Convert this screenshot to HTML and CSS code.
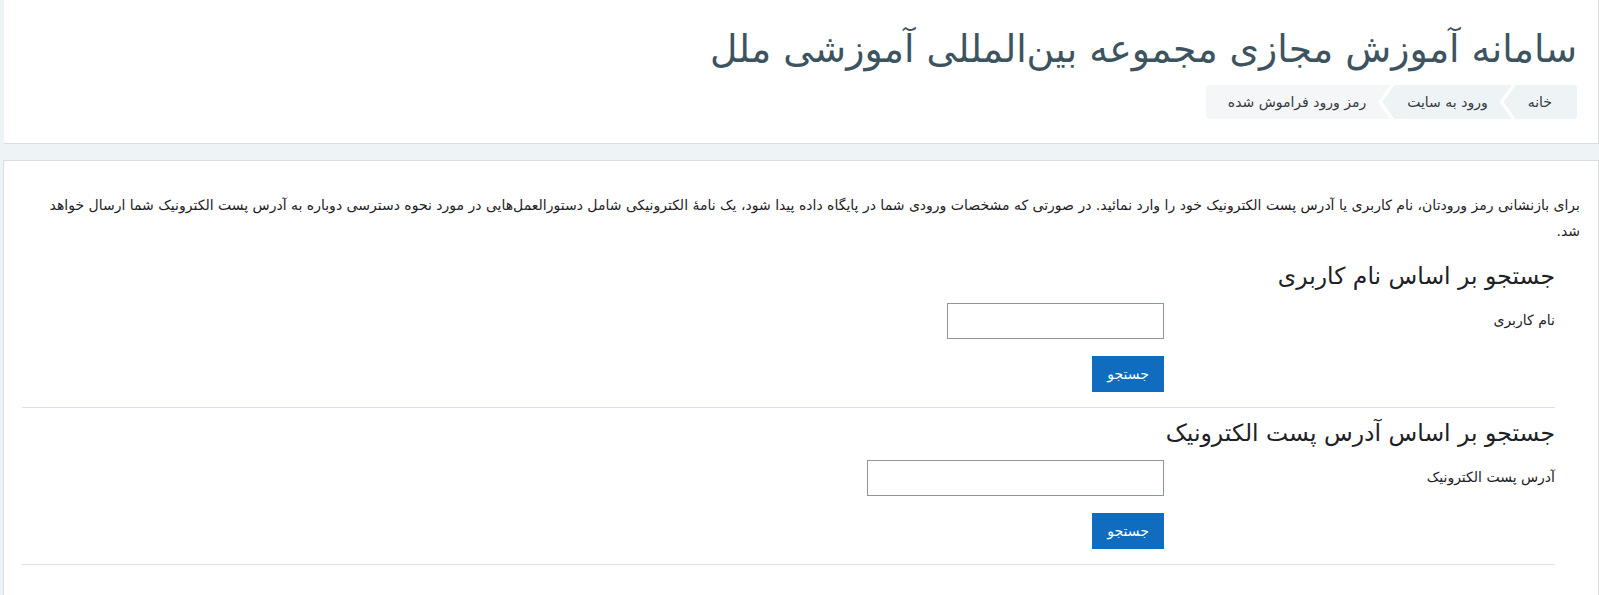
FILE: index.html
```html
<!DOCTYPE html>
<html lang="fa" dir="rtl">
<head>
<meta charset="utf-8">
<title>رمز ورود فراموش شده</title>
<link rel="stylesheet" href="styles.css">
</head>
<body>
<header class="page-header">
  <h1 class="site-title">سامانه آموزش مجازی مجموعه بین‌المللی آموزشی ملل</h1>
  <nav class="crumbs">
    <a class="crumb first" href="#">خانه</a>
    <a class="crumb" href="#">ورود به سایت</a>
    <span class="crumb current">رمز ورود فراموش شده</span>
  </nav>
</header>
<div class="gap"></div>
<main class="card">
  <p class="intro">برای بازنشانی رمز ورودتان، نام کاربری یا آدرس پست الکترونیک خود را وارد نمائید. در صورتی که مشخصات ورودی شما در پایگاه داده پیدا شود، یک نامهٔ الکترونیکی شامل دستورالعمل‌هایی در مورد نحوه دسترسی دوباره به آدرس پست الکترونیک شما ارسال خواهد شد.</p>
  <section class="fs">
    <h3 class="fs-title">جستجو بر اساس نام کاربری</h3>
    <div class="row">
      <label class="lbl">نام کاربری</label>
      <div class="field"><input class="inp inp-short" type="text"></div>
    </div>
    <div class="row row-btn">
      <div class="lbl"></div>
      <div class="field"><button class="btn">جستجو</button></div>
    </div>
  </section>
  <section class="fs">
    <h3 class="fs-title">جستجو بر اساس آدرس پست الکترونیک</h3>
    <div class="row">
      <label class="lbl">آدرس پست الکترونیک</label>
      <div class="field"><input class="inp inp-long" type="text"></div>
    </div>
    <div class="row row-btn">
      <div class="lbl"></div>
      <div class="field"><button class="btn">جستجو</button></div>
    </div>
  </section>
</main>
</body>
</html>
```
FILE: styles.css
```css
html, body {
  margin: 0;
  padding: 0;
}
body {
  background: #eef3f6;
  font-family: "DejaVu Sans", sans-serif;
  color: #1d2125;
  font-size: 14px;
  width: 1597px;
  overflow: hidden;
  height: 595px;
}
.page-header {
  background: #fff;
  border-right: 1px solid #d9dee2;
  border-bottom: 1px solid #d9dee2;
  width: 1595px;
  height: 144px;
  box-sizing: border-box;
  padding: 23px 21px 0 20px;
  display: flex;
  flex-direction: column;
  align-items: flex-start;
}
.site-title {
  margin: 0;
  font-family: "DejaVu Sans", sans-serif;
  font-weight: normal;
  font-size: 37.7px;
  line-height: 52px;
  color: #3d5460;
}
.crumbs {
  margin-top: 10px;
  display: flex;
  height: 34px;
  border-radius: 3px;
  overflow: hidden;
}
.crumb {
  display: flex;
  align-items: center;
  text-decoration: none;
  color: #343a40;
  font-size: 14px;
  background: #eef3f6;
  padding: 0 24px 0 25px;
  margin-left: -8px;
  clip-path: polygon(100% 0, calc(100% - 12px) 50%, 100% 100%, 12px 100%, 0 50%, 12px 0);
}
.crumb.first {
  padding: 0 25px 0 24px;
  clip-path: polygon(100% 0, 100% 100%, 12px 100%, 0 50%, 12px 0);
}
.crumb.current {
  background: #f5f6f7;
  clip-path: polygon(100% 0, calc(100% - 12px) 50%, 100% 100%, 0 100%, 0 0);
  margin-left: 0;
  padding: 0 24px 0 22px;
}
.gap {
  height: 16px;
}
.card {
  display: block;
  background: #fff;
  border: 1px solid #d9dee2;
  border-bottom: none;
  margin-left: 1px;
  height: 440px;
  box-sizing: border-box;
  padding: 31px 18px 0 18px;
}
.intro {
  margin: 0 0 15px 20px;
  font-size: 14px;
  line-height: 26px;
}
.fs {
  margin-right: 25px;
  border-bottom: 1px solid #dee2e6;
  padding-bottom: 15px;
  margin-bottom: 8px;
}
.fs-title {
  margin: 0 0 10px;
  font-weight: normal;
  font-size: 23.5px;
  line-height: 34px;
}
.row {
  display: flex;
}
.row-btn {
  margin-top: 17px;
}
.lbl {
  width: 383px;
  flex: none;
  box-sizing: border-box;
  padding-top: 7px;
  font-size: 14px;
  line-height: 21px;
}
.field {
  padding-right: 8px;
}
.inp {
  display: block;
  height: 36px;
  box-sizing: border-box;
  border: 1px solid #8f959e;
  background: #fff;
  margin: 0;
}
.inp-short { width: 217px; }
.inp-long { width: 297px; }
.btn {
  display: block;
  width: 72px;
  height: 36px;
  border: none;
  background: #0f6cbf;
  color: #fff;
  font-family: inherit;
  font-weight: normal;
  font-size: 14px;
  padding: 0;
}
```
